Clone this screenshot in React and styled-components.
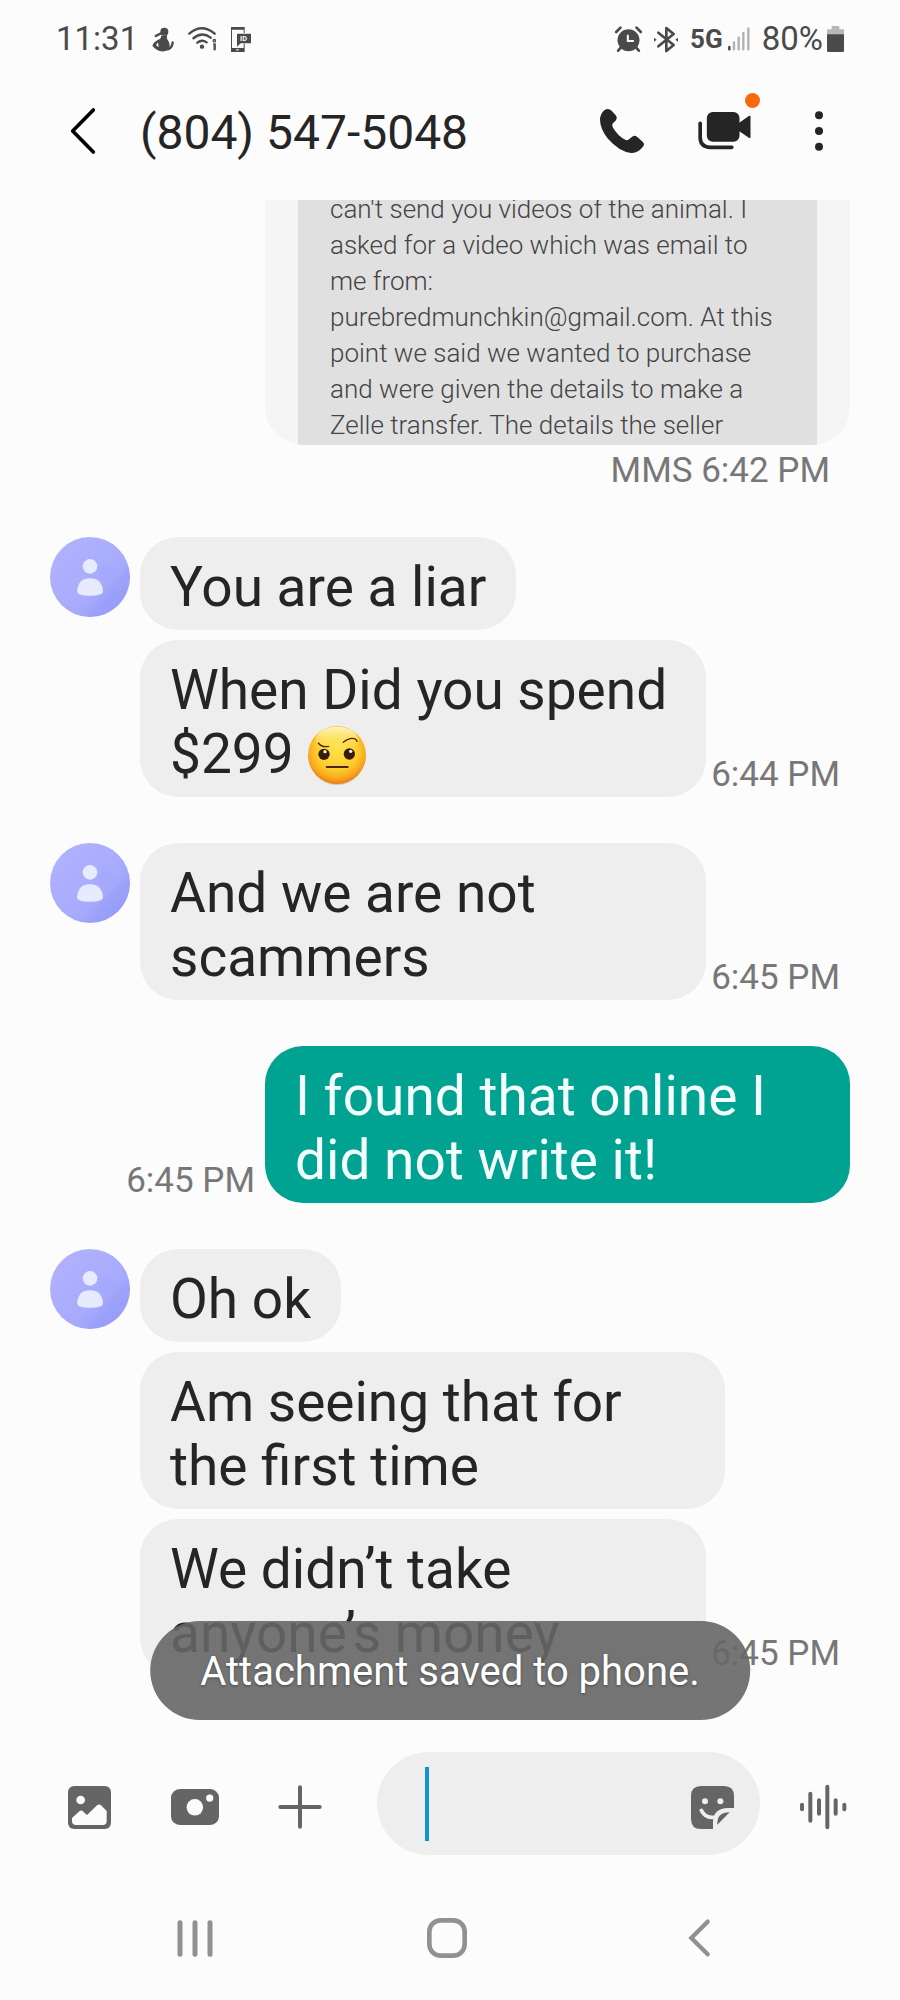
import React from 'react';
import styled, { createGlobalStyle } from 'styled-components';

const GlobalStyle = createGlobalStyle`
  * {
    box-sizing: border-box;
  }

  body {
    margin: 0;
    background: #fcfcfc;
    color: #252525;
    font-family: Roboto, 'Noto Sans', sans-serif;
  }
`;

const Screen = styled.div`
  display: flex;
  flex-direction: column;
  min-height: 100vh;
`;

const Icon = styled.svg`
  display: block;
  flex: none;
  overflow: visible;
`;

const IconButton = styled.button`
  display: flex;
  flex: none;
  align-items: center;
  justify-content: center;
  width: ${props => props.$width || 'auto'};
  height: ${props => props.$height || 'auto'};
  padding: 0;
  border: 0;
  background: none;
  color: inherit;
  cursor: pointer;
`;

/* status bar */

const StatusBar = styled.div`
  display: flex;
  align-items: center;
  justify-content: space-between;
  height: 62px;
  padding: 16px 56px 0;
  color: #4a4a4a;
`;

const StatusGroup = styled.div`
  display: flex;
  align-items: center;
  gap: ${props => props.$gap};
`;

const StatusText = styled.span`
  font-size: 33px;
  line-height: 40px;
`;

const Network = styled.span`
  font-size: 26px;
  font-weight: 700;
  line-height: 32px;
`;

/* header */

const Header = styled.header`
  display: flex;
  align-items: center;
  height: 138px;
  padding: 0 38px 0 56px;
`;

const ContactName = styled.h1`
  flex: 1;
  margin: 0 0 0 30px;
  padding-top: 4px;
  font-size: 48px;
  font-weight: 400;
  line-height: 56px;
`;

const HeaderActions = styled.div`
  display: flex;
  align-items: center;
`;

const VideoButton = styled(IconButton)`
  position: relative;
`;

const NewDot = styled.span`
  position: absolute;
  top: 10px;
  right: 16px;
  width: 15px;
  height: 15px;
  border-radius: 50%;
  background: #f66a0d;
`;

/* thread */

const Thread = styled.main`
  position: relative;
  display: flex;
  flex: 1;
  flex-direction: column;
  gap: 46px;
  padding: 0 50px;
  overflow: hidden;
`;

const Outgoing = styled.section`
  display: flex;
  flex-direction: column;
  align-items: flex-end;
`;

const Incoming = styled.section`
  display: flex;
  align-items: flex-start;
  gap: 10px;
`;

const Stack = styled.div`
  display: flex;
  flex: 1;
  flex-direction: column;
  gap: 10px;
`;

const Row = styled.div`
  display: flex;
  align-items: flex-end;
  justify-content: ${props => (props.$sent ? 'flex-end' : 'flex-start')};
  width: 100%;
`;

const Bubble = styled.p`
  flex: 0 1 auto;
  max-width: calc(100% - ${props => (props.$sent ? '215px' : '125px')});
  margin: 0;
  padding: 18px 30px 11px;
  border-radius: 38px;
  background: ${props => (props.$sent ? '#00a291' : '#eeeeee')};
  color: ${props => (props.$sent ? '#f4ffff' : '#252525')};
  font-size: 55px;
  line-height: 64px;
`;

const Time = styled.time`
  flex: none;
  padding: ${props => (props.$sent ? '0 10px 2px 0' : '0 10px 2px 5px')};
  color: #777777;
  font-size: 35px;
  line-height: 40px;
  white-space: nowrap;
`;

const Attachment = styled.div`
  display: flex;
  align-items: flex-end;
  width: calc(100% - 215px);
  height: 245px;
  padding: 0 33px;
  overflow: hidden;
  border-radius: 0 0 38px 38px;
  background: #f5f5f5;
`;

const AttachmentText = styled.p`
  flex: 1;
  margin: 0;
  padding: 0 32px 2px;
  background: #e0e0e0;
  color: #444444;
  font-size: 26px;
  font-weight: 300;
  line-height: 36px;
`;

const AttachmentTime = styled.time`
  padding: 6px 20px 0 0;
  color: #777777;
  font-size: 35px;
  line-height: 40px;
`;

const Emoji = styled.svg`
  width: 60px;
  height: 60px;
  overflow: visible;
  vertical-align: -12px;
`;

const Toast = styled.div`
  position: absolute;
  bottom: 32px;
  left: 50%;
  padding: 29px 50px 26px;
  border-radius: 50px;
  background: rgba(102, 102, 102, 0.9);
  color: #ffffff;
  font-size: 40px;
  line-height: 44px;
  text-shadow: 0 1px 3px rgba(0, 0, 0, 0.4);
  white-space: nowrap;
  transform: translateX(-50%);
`;

/* composer */

const Composer = styled.form`
  display: flex;
  align-items: flex-end;
  padding: 0 25px 21px 37px;
  color: #656565;
`;

const Field = styled.div`
  display: flex;
  flex: 1;
  align-items: flex-end;
  min-width: 0;
  height: 103px;
  margin: 0 10px 0 25px;
  padding-left: 48px;
  border-radius: 52px;
  background: #eeeeee;
`;

const Caret = styled.span`
  flex: none;
  align-self: center;
  width: 4px;
  height: 74px;
  background: #1593c8;
`;

const MessageInput = styled.input`
  flex: 1;
  min-width: 0;
  height: 103px;
  padding: 0;
  border: 0;
  outline: 0;
  background: transparent;
  color: #252525;
  caret-color: transparent;
  font: inherit;
  font-size: 55px;
`;

const NavBar = styled.nav`
  display: flex;
  height: 124px;
  padding: 0 75px 0 69px;
  color: #919191;

  button {
    flex: 1;
  }
`;

const Avatar = () => (
  <Icon width="80" height="80" viewBox="0 0 240 240" aria-hidden="true">
    <defs>
      <linearGradient id="avatar" x1="0" y1="0" x2="1" y2="1">
        <stop offset="0" stopColor="#b2b3ff" />
        <stop offset="0.6" stopColor="#a8abfc" />
        <stop offset="1" stopColor="#8f98f6" />
      </linearGradient>
    </defs>
    <circle cx="120" cy="120" r="120" fill="url(#avatar)" />
    <path d="M110 239q20-34 42-60q34-34 84-88a120 120 0 0 1-126 148z" fill="#959cf8" opacity="0.35" />
    <circle cx="168" cy="108" r="22" fill="#9fa4fa" opacity="0.45" />
    <circle cx="120" cy="88" r="22" fill="#e8eaff" />
    <path d="M81 164q3-40 39-40t39 40q-2 12-39 12t-39-12z" fill="#e8eaff" />
  </Icon>
);

const RaisedBrow = () => (
  <Emoji viewBox="0 0 180 180" role="img" aria-label="face with raised eyebrow">
    <defs>
      <radialGradient id="face" cx="0.5" cy="0.4" r="0.6">
        <stop offset="0" stopColor="#ffe24a" />
        <stop offset="0.6" stopColor="#fdcd2c" />
        <stop offset="0.85" stopColor="#f9a51d" />
        <stop offset="1" stopColor="#e97c10" />
      </radialGradient>
      <linearGradient id="shine" x1="0" y1="0" x2="0" y2="1">
        <stop offset="0" stopColor="#fff6c4" />
        <stop offset="1" stopColor="#ffe24a" stopOpacity="0" />
      </linearGradient>
    </defs>
    <ellipse cx="90" cy="93" rx="85" ry="87" fill="#b9a98e" opacity="0.6" />
    <circle cx="90" cy="90" r="87" fill="url(#face)" />
    <ellipse cx="90" cy="45" rx="64" ry="40" fill="url(#shine)" />
    <circle cx="51" cy="88" r="17" fill="#3a1c0c" />
    <circle cx="127" cy="87" r="17" fill="#3a1c0c" />
    <circle cx="54" cy="80" r="5" fill="#fff3e0" />
    <circle cx="131" cy="79" r="5" fill="#fff3e0" />
    <g fill="none" stroke="#4b260d" strokeLinecap="round">
      <path d="M59 126H122" strokeWidth="6" />
      <path d="M34 54q10 14 31 10" strokeWidth="4" />
      <path d="M109 52q20-17 36-10q4 3 5 7" strokeWidth="4" />
    </g>
  </Emoji>
);

const App = () => {
  return (
    <>
      <GlobalStyle />
      <Screen>
        <StatusBar>
          <StatusGroup $gap="14px">
            <StatusText>11:31</StatusText>
            <StatusGroup $gap="14px">
              <Icon width="22" height="25" viewBox="0 0 66 75" fill="currentColor" aria-hidden="true">
                <circle cx="37" cy="14" r="12" />
                <path d="M27 26L46 25Q42 34 49 42Q57 56 50 66Q42 75 28 73Q12 70 1 56Q4 46 18 38Q28 36 27 26z" />
                <path d="M18 46L12 55L20 60z" fill="#fcfcfc" />
                <path d="M11 27L27 19" stroke="currentColor" strokeWidth="7" strokeLinecap="round" />
                <path d="M44 67Q60 66 62 46" fill="none" stroke="currentColor" strokeWidth="7" strokeLinecap="round" />
              </Icon>
              <Icon width="29" height="24" viewBox="0 0 87 72" fill="none" stroke="currentColor" strokeWidth="7" strokeLinecap="round" aria-hidden="true">
                <path d="M4 20Q41-12 80 20" />
                <path d="M16 34Q42 12 68 32" />
                <path d="M28 47Q42 36 56 46" />
                <circle cx="42" cy="59" r="3" />
                <circle cx="79" cy="41" r="2" />
                <path d="M76 52H80V70" strokeLinecap="butt" />
              </Icon>
              <Icon width="20" height="25" viewBox="0 0 60 75" fill="currentColor" aria-hidden="true">
                <path d="M0 0H41V18H38V8H3V63H38V50H41V75H0z" />
                <path d="M18 20H60V49H29L18 59z" />
                <rect x="15" y="67" width="9" height="3" fill="#fcfcfc" />
                <text x="27" y="43" fill="#fcfcfc" fontSize="22" fontWeight="700">ID</text>
              </Icon>
            </StatusGroup>
          </StatusGroup>
          <StatusGroup $gap="12px">
            <Icon width="27" height="26" viewBox="0 0 80 78" fill="currentColor" aria-hidden="true">
              <circle cx="40" cy="43" r="33" />
              <path d="M38 26V45H56" fill="none" stroke="#fcfcfc" strokeWidth="6" />
              <path d="M3 18L16 5M64 5L77 18M16 66L9 74M64 66L71 74" stroke="currentColor" strokeWidth="8" strokeLinecap="round" />
            </Icon>
            <Icon width="24" height="27" viewBox="0 0 72 81" fill="none" stroke="currentColor" strokeWidth="8" aria-hidden="true">
              <path d="M13 20L59 57L37 75V6L59 24L13 61" strokeLinejoin="round" strokeLinecap="round" />
              <path d="M0 35L8 41L0 47zM72 35L64 41L72 47z" fill="currentColor" stroke="none" />
            </Icon>
            <StatusGroup $gap="5px">
              <Network>5G</Network>
              <Icon width="22" height="24" viewBox="0 0 66 72" fill="none" stroke="#b0b0b0" strokeWidth="7" strokeLinecap="round" aria-hidden="true">
                <path d="M4 60V67" stroke="#3c3c3c" />
                <path d="M18 46V67M32 32V67M46 18V67M61 4V67" />
              </Icon>
            </StatusGroup>
            <StatusGroup $gap="4px">
              <StatusText>80%</StatusText>
              <Icon width="17" height="26" viewBox="0 0 51 78" aria-hidden="true">
                <path d="M14 0H37V10H51V26H0V10H14z" fill="#b8b8b8" />
                <path d="M0 25H51V74Q51 78 47 78H4Q0 78 0 74z" fill="#4a4a4a" />
              </Icon>
            </StatusGroup>
          </StatusGroup>
        </StatusBar>

        <Header>
          <IconButton aria-label="Back" $width="54px" $height="90px">
            <Icon width="24" height="46" viewBox="0 0 72 138" fill="none" stroke="#000" strokeWidth="11" strokeLinecap="round" strokeLinejoin="round">
              <path d="M67 6L5 69L67 132" />
            </Icon>
          </IconButton>
          <ContactName>(804) 547-5048</ContactName>
          <HeaderActions>
            <IconButton aria-label="Call" $width="100px" $height="96px">
              <Icon width="44" height="44" viewBox="452 327 131 131" fill="currentColor">
                <path d="M474 327Q482 327 488 334L500 347Q505 354 499 361L489 371Q488 376 490 381Q505 408 530 420Q536 421 541 415L550 408Q556 405 563 410L578 424Q586 431 581 438Q566 459 545 458Q510 455 475 415Q452 385 452 358Q453 340 466 330Q470 327 474 327z" />
              </Icon>
            </IconButton>
            <VideoButton aria-label="Video call" $width="104px" $height="96px">
              <Icon width="53" height="38" viewBox="739 336 158 114" fill="currentColor">
                <rect x="765" y="336" width="98" height="89" rx="18" />
                <path d="M860 370L891 348Q896 345 896 350V411Q896 416 891 413L860 392z" />
                <path d="M745 370V412Q745 442 776 442H840" fill="none" stroke="currentColor" strokeWidth="11" strokeLinecap="round" />
              </Icon>
              <NewDot />
            </VideoButton>
            <IconButton aria-label="More options" $width="86px" $height="96px">
              <Icon width="8" height="40" viewBox="0 0 24 120" fill="currentColor">
                <circle cx="12" cy="13" r="12" />
                <circle cx="12" cy="60" r="12" />
                <circle cx="12" cy="107" r="12" />
              </Icon>
            </IconButton>
          </HeaderActions>
        </Header>

        <Thread>
          <Outgoing>
            <Attachment>
              <AttachmentText>
                can't send you videos of the animal. I asked for a video which was email to me from:
                purebredmunchkin@gmail.com. At this point we said we wanted to purchase and were given
                the details to make a Zelle transfer. The details the seller
              </AttachmentText>
            </Attachment>
            <AttachmentTime>MMS 6:42 PM</AttachmentTime>
          </Outgoing>

          <Incoming>
            <Avatar />
            <Stack>
              <Row>
                <Bubble>You are a liar</Bubble>
              </Row>
              <Row>
                <Bubble>
                  When Did you spend $299 <RaisedBrow />
                </Bubble>
                <Time>6:44 PM</Time>
              </Row>
            </Stack>
          </Incoming>

          <Incoming>
            <Avatar />
            <Stack>
              <Row>
                <Bubble>And we are not scammers</Bubble>
                <Time>6:45 PM</Time>
              </Row>
            </Stack>
          </Incoming>

          <Outgoing>
            <Row $sent>
              <Time $sent>6:45 PM</Time>
              <Bubble $sent>I found that online I did not write it!</Bubble>
            </Row>
          </Outgoing>

          <Incoming>
            <Avatar />
            <Stack>
              <Row>
                <Bubble>Oh ok</Bubble>
              </Row>
              <Row>
                <Bubble>Am seeing that for the first time</Bubble>
              </Row>
              <Row>
                <Bubble>We didn’t take anyone’s money</Bubble>
                <Time>6:45 PM</Time>
              </Row>
            </Stack>
          </Incoming>

          <Toast role="status">Attachment saved to phone.</Toast>
        </Thread>

        <Composer onSubmit={e => e.preventDefault()}>
          <IconButton type="button" aria-label="Gallery" $width="105px" $height="96px">
            <Icon width="43" height="43" viewBox="116 168 129 129">
              <rect x="116" y="168" width="129" height="129" rx="18" fill="currentColor" />
              <circle cx="154" cy="210" r="13" fill="#fcfcfc" />
              <path d="M128 264L150 244Q156 239 162 245L173 255L203 226Q209 221 215 226L232 243V272Q232 285 220 285H140Q128 285 128 272z" fill="#fcfcfc" />
            </Icon>
          </IconButton>
          <IconButton type="button" aria-label="Camera" $width="105px" $height="96px">
            <Icon width="48" height="36" viewBox="423 176 145 108">
              <rect x="423" y="176" width="145" height="108" rx="26" fill="currentColor" />
              <circle cx="495" cy="231" r="25" fill="#fcfcfc" />
              <circle cx="540" cy="203" r="11" fill="#fcfcfc" />
            </Icon>
          </IconButton>
          <IconButton type="button" aria-label="Add" $width="105px" $height="96px">
            <Icon width="44" height="44" viewBox="0 0 132 132" fill="none" stroke="currentColor" strokeWidth="12" strokeLinecap="round">
              <path d="M66 7V125M7 66H125" />
            </Icon>
          </IconButton>
          <Field>
            <Caret />
            <MessageInput type="text" aria-label="Message" />
            <IconButton type="button" aria-label="Stickers" $width="95px" $height="96px">
              <Icon width="43" height="43" viewBox="723 168 129 129" fill="none">
                <path d="M753 168H822Q852 168 852 198V234H834Q789 236 789 276V297H753Q723 297 723 267V198Q723 168 753 168z" fill="currentColor" />
                <circle cx="765" cy="214" r="9" fill="#eee" />
                <circle cx="811" cy="214" r="9" fill="#eee" />
                <path d="M754 241Q768 268 798 260" stroke="#eee" strokeWidth="11" strokeLinecap="round" />
                <path d="M839 247L802 284Q800 247 839 247z" fill="currentColor" />
              </Icon>
            </IconButton>
          </Field>
          <IconButton type="button" aria-label="Voice message" $width="105px" $height="96px">
            <Icon width="46" height="44" viewBox="1048 166 138 132" fill="none" stroke="currentColor" strokeWidth="12" strokeLinecap="round">
              <path d="M1054 225V239M1079 192V273M1105 212V252M1130 171V293M1155 212V252M1181 225V239" />
            </Icon>
          </IconButton>
        </Composer>

        <NavBar>
          <IconButton aria-label="Recent apps">
            <Icon width="36" height="37" viewBox="0 0 108 111" fill="none" stroke="currentColor" strokeWidth="15" strokeLinecap="round">
              <path d="M9 8V103M54 8V103M99 8V103" />
            </Icon>
          </IconButton>
          <IconButton aria-label="Home">
            <Icon width="40" height="40" viewBox="0 0 120 120" fill="none" stroke="currentColor" strokeWidth="14">
              <rect x="7" y="7" width="106" height="106" rx="34" />
            </Icon>
          </IconButton>
          <IconButton aria-label="Back">
            <Icon width="22" height="38" viewBox="0 0 66 114" fill="none" stroke="currentColor" strokeWidth="13" strokeLinecap="round">
              <path d="M59 8L10 57L59 106" />
            </Icon>
          </IconButton>
        </NavBar>
      </Screen>
    </>
  );
};

export default App;
